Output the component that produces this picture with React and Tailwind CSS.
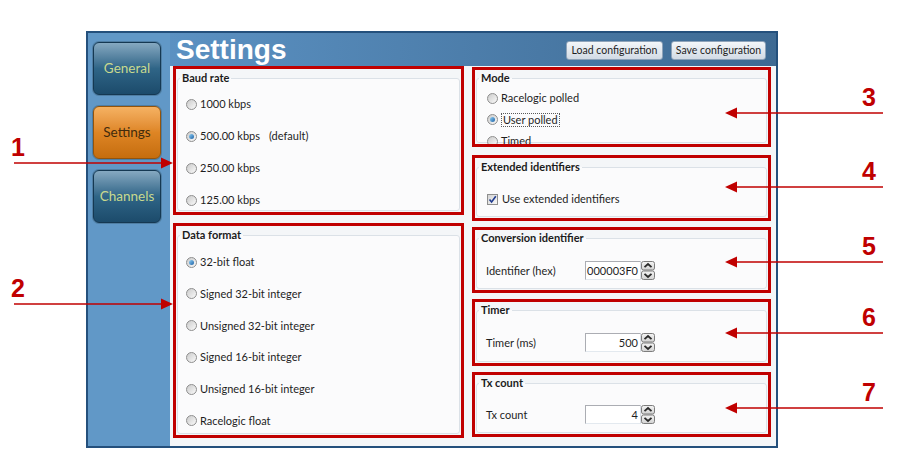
import React from "react";

const baudRates = [
  { label: "1000 kbps" },
  { label: "500.00 kbps", note: "(default)", checked: true },
  { label: "250.00 kbps" },
  { label: "125.00 kbps" },
];

const dataFormats = [
  { label: "32-bit float", checked: true },
  { label: "Signed 32-bit integer" },
  { label: "Unsigned 32-bit integer" },
  { label: "Signed 16-bit integer" },
  { label: "Unsigned 16-bit integer" },
  { label: "Racelogic float" },
];

const modes = [
  { label: "Racelogic polled" },
  { label: "User polled", checked: true, focused: true },
  { label: "Timed" },
];

const leftCallouts = [
  { n: "1", y: 163 },
  { n: "2", y: 304 },
];

const rightCallouts = [
  { n: "3", y: 113 },
  { n: "4", y: 187 },
  { n: "5", y: 262 },
  { n: "6", y: 333 },
  { n: "7", y: 408 },
];

function Radio({ checked }) {
  return (
    <span className="flex h-[11px] w-[11px] shrink-0 items-center justify-center rounded-full border border-[#8e8e8e] bg-linear-to-br from-[#cbcbcb] to-[#fafafa]">
      {checked && (
        <span className="h-[5px] w-[5px] rounded-full bg-linear-to-br from-[#8fd0f5] to-[#1b62a6]" />
      )}
    </span>
  );
}

function RadioRow({ item }) {
  return (
    <div className="flex h-[14px] items-center gap-[3px] text-[11px] leading-[14px]">
      <Radio checked={item.checked} />
      {item.focused ? (
        <span className="border border-dotted border-[#5a5a5a] px-[1px] leading-[12px]">
          {item.label}
        </span>
      ) : (
        <span>{item.label}</span>
      )}
      {item.note && <span className="ml-[6px]">{item.note}</span>}
    </div>
  );
}

function Spinner() {
  return (
    <svg width="14" height="19" viewBox="0 0 14 19" className="shrink-0">
      <defs>
        <linearGradient id="spin" x1="0" y1="0" x2="0" y2="1">
          <stop offset="0" stopColor="#f4f4f4" />
          <stop offset="1" stopColor="#d2d2d2" />
        </linearGradient>
      </defs>
      <rect x="0.5" y="0.5" width="13" height="8.5" rx="2" fill="url(#spin)" stroke="#7d7d7d" />
      <rect x="0.5" y="10" width="13" height="8.5" rx="2" fill="url(#spin)" stroke="#7d7d7d" />
      <path d="M3.5 6.2 L7 3 L10.5 6.2" fill="none" stroke="#2a2a2a" strokeWidth="1.8" />
      <path d="M3.5 12.8 L7 16 L10.5 12.8" fill="none" stroke="#2a2a2a" strokeWidth="1.8" />
    </svg>
  );
}

function NumberField({ label, value }) {
  return (
    <div className="flex h-[19px] items-center pl-[9px] text-[11px] leading-[14px]">
      <span className="w-[99px]">{label}</span>
      <div className="flex h-[19px] w-[56px] items-center justify-end border border-[#abadb3] border-b-[#e3e9ef] border-r-[#dbdfe6] bg-white pr-[2px]">
        {value}
      </div>
      <Spinner />
    </div>
  );
}

function GroupBox({ title, children }) {
  return (
    <fieldset className="h-full rounded-[3px] border border-[#dbe1e7] bg-[#fbfbfc]">
      <legend className="ml-[2px] px-[2px] text-[11px] leading-[14px] font-bold text-[#1b1b1b]">
        {title}
      </legend>
      {children}
    </fieldset>
  );
}

function Callout({ className, children }) {
  return (
    <div
      className={`overflow-hidden border-[3px] border-[#c00000] px-[1px] pb-[1px] ${className}`}
    >
      {children}
    </div>
  );
}

function NavButton({ label, active }) {
  return (
    <div
      className={
        active
          ? "flex h-[53px] w-[68px] items-center justify-center rounded-[6px] border border-[#93540c] bg-linear-to-b from-[#f5b262] via-[#de8524] to-[#c56d0d] text-[13.5px] text-[#412b0d] shadow-[0_0_0_1px_#4f7ea3]"
          : "flex h-[53px] w-[68px] items-center justify-center rounded-[6px] border border-[#153852] bg-linear-to-b from-[#86a9c1] via-[#2f6587] to-[#1c4b6b] text-[13.5px] text-[#c9d98e] shadow-[0_0_0_1px_#4f7ea3]"
      }
    >
      {label}
    </div>
  );
}

function HeaderButton({ label, width }) {
  return (
    <button
      className={`h-[19px] ${width} rounded-[3px] border border-[#8ea3b9] bg-linear-to-b from-[#f3f6f9] to-[#d2dbe5] text-[10.5px] leading-[17px] text-[#1e1e1e]`}
    >
      {label}
    </button>
  );
}

function Annotations() {
  return (
    <>
      <svg
        width="900"
        height="459"
        className="pointer-events-none absolute left-0 top-0"
      >
        {leftCallouts.map((c) => (
          <g key={c.n}>
            <line x1="14" y1={c.y} x2="163" y2={c.y} stroke="#c00000" strokeWidth="1.5" />
            <polygon points={`173,${c.y} 161,${c.y - 5.5} 161,${c.y + 5.5}`} fill="#c00000" />
          </g>
        ))}
        {rightCallouts.map((c) => (
          <g key={c.n}>
            <line x1="883" y1={c.y} x2="735" y2={c.y} stroke="#c00000" strokeWidth="1.5" />
            <polygon points={`725,${c.y} 737,${c.y - 5.5} 737,${c.y + 5.5}`} fill="#c00000" />
          </g>
        ))}
      </svg>
      {leftCallouts.map((c) => (
        <span
          key={c.n}
          className="absolute left-[11px] font-['Liberation_Sans',sans-serif] text-[25px] leading-[25px] font-bold text-[#c00000]"
          style={{ top: c.y - 28 }}
        >
          {c.n}
        </span>
      ))}
      {rightCallouts.map((c) => (
        <span
          key={c.n}
          className="absolute left-[862px] font-['Liberation_Sans',sans-serif] text-[25px] leading-[25px] font-bold text-[#c00000]"
          style={{ top: c.y - 28 }}
        >
          {c.n}
        </span>
      ))}
    </>
  );
}

export default function App() {
  return (
    <div className="relative h-[459px] w-[900px] overflow-hidden bg-white font-['Lato',sans-serif] text-[#1e1e1e]">
      <div className="pl-[86px] pt-[31px]">
        <div className="flex h-[417px] w-[692px] border-2 border-[#24507c] bg-[#6198c7]">
          {/* side navigation */}
          <div className="flex w-[82px] flex-col gap-[11px] pl-[5px] pt-[9px]">
            <NavButton label="General" />
            <NavButton label="Settings" active />
            <NavButton label="Channels" />
          </div>

          <div className="flex flex-1 flex-col">
            <div className="flex h-[33px] bg-linear-to-r from-[#5b91c2] to-[#3e6a93] pl-[6px] pr-[10px]">
              <h1 className="mt-[3px] font-['Liberation_Sans',sans-serif] text-[28px] leading-[28px] font-bold text-white">
                Settings
              </h1>
              <div className="ml-auto mt-[8px] flex gap-[8px]">
                <HeaderButton label="Load configuration" width="w-[97px]" />
                <HeaderButton label="Save configuration" width="w-[95px]" />
              </div>
            </div>

            <div className="flex flex-1 gap-[8px] bg-[#f4f6f8] pl-[3px]">
              {/* left column */}
              <div className="flex w-[291px] flex-col gap-[8px]">
                <Callout className="h-[149px] pt-[2px]">
                  <GroupBox title="Baud rate">
                    <div className="flex flex-col gap-[18px] pl-[8px] pt-[12px]">
                      {baudRates.map((item) => (
                        <RadioRow key={item.label} item={item} />
                      ))}
                    </div>
                  </GroupBox>
                </Callout>

                <Callout className="h-[215px] pt-[2px]">
                  <GroupBox title="Data format">
                    <div className="flex flex-col gap-[17.8px] pl-[8px] pt-[13px]">
                      {dataFormats.map((item) => (
                        <RadioRow key={item.label} item={item} />
                      ))}
                    </div>
                  </GroupBox>
                </Callout>
              </div>

              {/* right column */}
              <div className="flex w-[299px] flex-col pt-[1px]">
                <Callout className="h-[80px] pt-[1px]">
                  <GroupBox title="Mode">
                    <div className="flex flex-col gap-[7.5px] pl-[10px] pt-[6px]">
                      {modes.map((item) => (
                        <RadioRow key={item.label} item={item} />
                      ))}
                    </div>
                  </GroupBox>
                </Callout>

                <Callout className="mt-[8px] h-[66px] pt-[2px]">
                  <GroupBox title="Extended identifiers">
                    <div className="flex h-[14px] items-center gap-[4px] pl-[10px] pt-[0px] mt-[18px] text-[11px] leading-[14px]">
                      <span className="flex h-[11px] w-[11px] shrink-0 items-center justify-center border border-[#8e8e8e] bg-linear-to-br from-[#d3d3d3] to-[#f8f8f8]">
                        <svg width="9" height="9" viewBox="0 0 9 9">
                          <path d="M1.5 4.5 L3.6 7 L7.8 1.2" fill="none" stroke="#1e3a8f" strokeWidth="1.6" />
                        </svg>
                      </span>
                      <span>Use extended identifiers</span>
                    </div>
                  </GroupBox>
                </Callout>

                <Callout className="mt-[6px] h-[66px] pt-[1px]">
                  <GroupBox title="Conversion identifier">
                    <div className="pt-[16px]">
                      <NumberField label="Identifier (hex)" value="000003F0" />
                    </div>
                  </GroupBox>
                </Callout>

                <Callout className="mt-[6px] h-[67px] pt-[1px]">
                  <GroupBox title="Timer">
                    <div className="pt-[16px]">
                      <NumberField label="Timer (ms)" value="500" />
                    </div>
                  </GroupBox>
                </Callout>

                <Callout className="mt-[6px] h-[65px] pt-[1px]">
                  <GroupBox title="Tx count">
                    <div className="pt-[15px]">
                      <NumberField label="Tx count" value="4" />
                    </div>
                  </GroupBox>
                </Callout>
              </div>
            </div>
          </div>
        </div>
      </div>

      <Annotations />
    </div>
  );
}
